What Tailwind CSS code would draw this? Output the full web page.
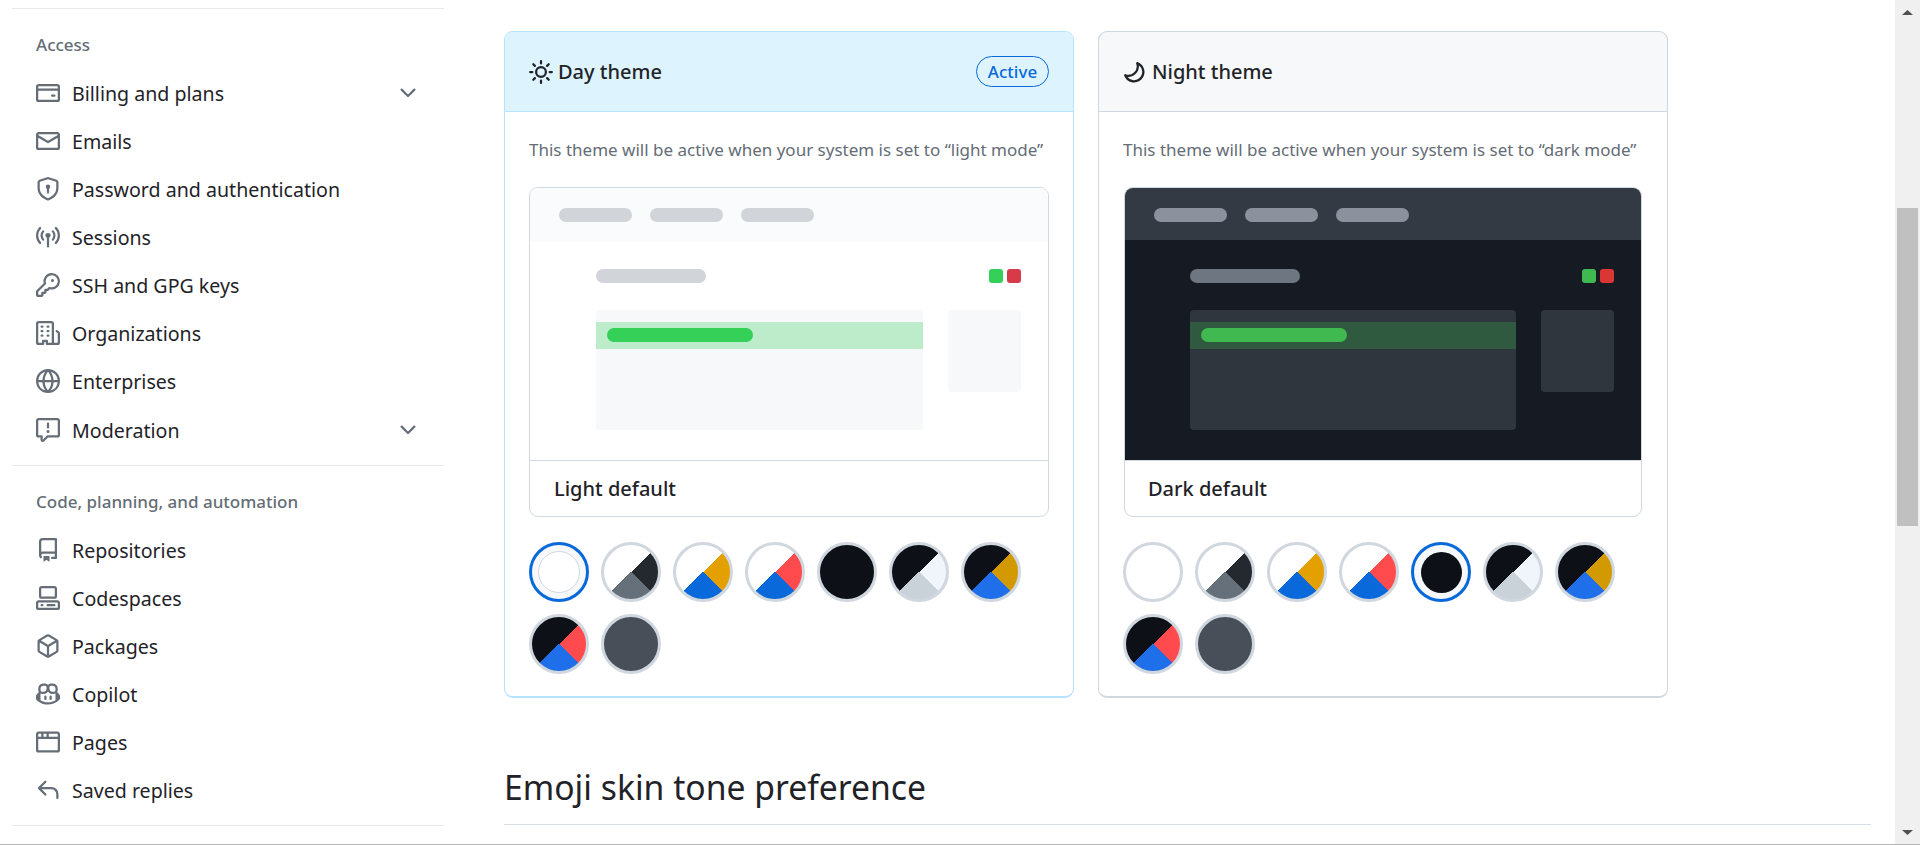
<!DOCTYPE html>
<html lang="en">
<head>
    <meta charset="utf-8">
    <title>Appearance</title>
    <script src="https://cdn.jsdelivr.net/npm/@tailwindcss/browser@4"></script>
</head>
<body class="bg-white">
<div class="h-[845px] w-[1920px] overflow-hidden flex flex-col font-['Noto_Sans',sans-serif] text-[#1f2328]">
    <div class="flex flex-1 min-h-0">

        <!-- Sidebar -->
        <nav class="w-[432px] ml-3 mr-[60px] pt-2 shrink-0 text-[19.6px]">
            <div class="border-t border-[#e5e9ed]"></div>
            <div class="h-[60px] pt-3 pl-6 flex items-center text-[17px] font-medium text-[#656d76]">Access</div>

            <div class="h-12 pl-6 pr-6 flex items-center">
                <svg class="w-6 h-6 fill-[#656d76] shrink-0" viewBox="0 0 16 16"><path d="M10.75 9a.75.75 0 0 0 0 1.5h1.5a.75.75 0 0 0 0-1.5h-1.5Z"/><path d="M0 3.75C0 2.784.784 2 1.75 2h12.5c.966 0 1.75.784 1.75 1.75v8.5A1.75 1.75 0 0 1 14.25 14H1.75A1.75 1.75 0 0 1 0 12.25ZM14.5 6.5h-13v5.75c0 .138.112.25.25.25h12.5a.25.25 0 0 0 .25-.25Zm0-2.75a.25.25 0 0 0-.25-.25H1.75a.25.25 0 0 0-.25.25V5h13Z"/></svg>
                <span class="ml-3 pt-px">Billing and plans</span>
                <svg class="w-6 h-6 fill-[#656d76] ml-auto" viewBox="0 0 16 16"><path d="M12.78 5.22a.749.749 0 0 1 0 1.06l-4.25 4.25a.749.749 0 0 1-1.06 0L3.22 6.28a.749.749 0 1 1 1.06-1.06L8 8.939l3.72-3.719a.749.749 0 0 1 1.06 0Z"/></svg>
            </div>
            <div class="h-12 pl-6 flex items-center">
                <svg class="w-6 h-6 fill-[#656d76] shrink-0" viewBox="0 0 16 16"><path d="M1.75 2h12.5c.966 0 1.75.784 1.75 1.75v8.5A1.75 1.75 0 0 1 14.25 14H1.75A1.75 1.75 0 0 1 0 12.25v-8.5C0 2.784.784 2 1.75 2ZM1.5 12.251c0 .138.112.25.25.25h12.5a.25.25 0 0 0 .25-.25V5.809L8.38 9.397a.75.75 0 0 1-.76 0L1.5 5.809v6.442Zm13-8.181v-.32a.25.25 0 0 0-.25-.25H1.75a.25.25 0 0 0-.25.25v.32L8 7.88Z"/></svg>
                <span class="ml-3 pt-px">Emails</span>
            </div>
            <div class="h-12 pl-6 flex items-center">
                <svg class="w-6 h-6 fill-[#656d76] shrink-0" viewBox="0 0 16 16"><path d="m8.533.133 5.25 1.68A1.75 1.75 0 0 1 15 3.48V7c0 1.566-.32 3.182-1.303 4.682-.983 1.498-2.585 2.813-5.032 3.855a1.697 1.697 0 0 1-1.33 0c-2.447-1.042-4.049-2.357-5.032-3.855C1.32 10.182 1 8.566 1 7V3.48a1.75 1.75 0 0 1 1.217-1.667l5.25-1.68a1.748 1.748 0 0 1 1.066 0Zm-.61 1.429.001.001-5.25 1.68a.251.251 0 0 0-.174.237V7c0 1.36.275 2.666 1.057 3.859.784 1.194 2.121 2.342 4.366 3.298a.196.196 0 0 0 .154 0c2.245-.957 3.582-2.103 4.366-3.297C13.225 9.666 13.5 8.358 13.5 7V3.48a.25.25 0 0 0-.174-.238l-5.25-1.68a.25.25 0 0 0-.153 0ZM9.5 6.5c0 .536-.286 1.032-.75 1.3v2.45a.75.75 0 0 1-1.5 0V7.8A1.5 1.5 0 1 1 9.5 6.5Z"/></svg>
                <span class="ml-3 pt-px">Password and authentication</span>
            </div>
            <div class="h-12 pl-6 flex items-center">
                <svg class="w-6 h-6 fill-[#656d76] shrink-0" viewBox="0 0 16 16"><path d="M8.75 8.582v5.668a.75.75 0 0 1-1.5 0V8.582a1.75 1.75 0 1 1 1.5 0Zm3.983-7.125a.75.75 0 0 1 1.06.026A7.976 7.976 0 0 1 16 7c0 2.139-.84 4.083-2.207 5.517a.75.75 0 1 1-1.086-1.034A6.474 6.474 0 0 0 14.5 7a6.474 6.474 0 0 0-1.793-4.483.75.75 0 0 1 .026-1.06Zm-9.466 0c.3.286.312.76.026 1.06A6.474 6.474 0 0 0 1.5 7a6.47 6.47 0 0 0 1.793 4.483.75.75 0 0 1-1.086 1.034A7.973 7.973 0 0 1 0 7c0-2.139.84-4.083 2.207-5.517a.75.75 0 0 1 1.06-.026Zm8.556 2.321A4.988 4.988 0 0 1 13 7a4.988 4.988 0 0 1-1.177 3.222.75.75 0 1 1-1.146-.967A3.487 3.487 0 0 0 11.5 7c0-.86-.309-1.645-.823-2.255a.75.75 0 0 1 1.146-.967Zm-6.492.958A3.48 3.48 0 0 0 4.5 7a3.48 3.48 0 0 0 .823 2.255.75.75 0 0 1-1.146.967A4.981 4.981 0 0 1 3 7a4.982 4.982 0 0 1 1.188-3.236.75.75 0 1 1 1.143.972Z"/></svg>
                <span class="ml-3 pt-px">Sessions</span>
            </div>
            <div class="h-12 pl-6 flex items-center">
                <svg class="w-6 h-6 fill-[#656d76] shrink-0" viewBox="0 0 16 16"><path d="M10.5 0a5.499 5.499 0 1 1-1.288 10.848l-.932.932a.749.749 0 0 1-.53.22H7v.75a.749.749 0 0 1-.22.53l-.5.5a.749.749 0 0 1-.53.22H5v.75a.749.749 0 0 1-.22.53l-.5.5a.749.749 0 0 1-.53.22h-2A1.75 1.75 0 0 1 0 14.25v-2c0-.199.079-.389.22-.53l4.932-4.932A5.5 5.5 0 0 1 10.5 0Zm-4 5.5c-.001.431.069.86.205 1.269a.75.75 0 0 1-.181.768L1.5 12.56v1.69c0 .138.112.25.25.25h1.69l.06-.06v-1.19a.75.75 0 0 1 .75-.75h1.19l.06-.06v-1.19a.75.75 0 0 1 .75-.75h1.19l1.023-1.025a.75.75 0 0 1 .768-.18A4 4 0 1 0 6.5 5.5ZM11 6a1 1 0 1 1 0-2 1 1 0 0 1 0 2Z"/></svg>
                <span class="ml-3 pt-px">SSH and GPG keys</span>
            </div>
            <div class="h-12 pl-6 flex items-center">
                <svg class="w-6 h-6 fill-[#656d76] shrink-0" viewBox="0 0 16 16"><path d="M1.75 16A1.75 1.75 0 0 1 0 14.25V1.75C0 .784.784 0 1.75 0h8.5C11.216 0 12 .784 12 1.75v12.5c0 .085-.006.168-.018.25h2.268a.25.25 0 0 0 .25-.25V8.285a.25.25 0 0 0-.111-.208l-1.055-.703a.749.749 0 1 1 .832-1.248l1.055.703c.487.325.779.871.779 1.456v5.965A1.75 1.75 0 0 1 14.25 16h-3.5a.766.766 0 0 1-.197-.026c-.099.017-.2.026-.303.026h-3a.75.75 0 0 1-.75-.75V14h-1v1.25a.75.75 0 0 1-.75.75Zm-.25-1.75c0 .138.112.25.25.25H4v-1.25a.75.75 0 0 1 .75-.75h2.5a.75.75 0 0 1 .75.75v1.25h2.25a.25.25 0 0 0 .25-.25V1.75a.25.25 0 0 0-.25-.25h-8.5a.25.25 0 0 0-.25.25ZM3.75 6h.5a.75.75 0 0 1 0 1.5h-.5a.75.75 0 0 1 0-1.5ZM3 3.75A.75.75 0 0 1 3.75 3h.5a.75.75 0 0 1 0 1.5h-.5A.75.75 0 0 1 3 3.75Zm4 3A.75.75 0 0 1 7.75 6h.5a.75.75 0 0 1 0 1.5h-.5A.75.75 0 0 1 7 6.75ZM7.75 3h.5a.75.75 0 0 1 0 1.5h-.5a.75.75 0 0 1 0-1.5ZM3 9.75A.75.75 0 0 1 3.75 9h.5a.75.75 0 0 1 0 1.5h-.5A.75.75 0 0 1 3 9.75ZM7.75 9h.5a.75.75 0 0 1 0 1.5h-.5a.75.75 0 0 1 0-1.5Z"/></svg>
                <span class="ml-3 pt-px">Organizations</span>
            </div>
            <div class="h-12 pl-6 flex items-center">
                <svg class="w-6 h-6 fill-[#656d76] shrink-0" viewBox="0 0 16 16"><path d="M8 0a8 8 0 1 1 0 16A8 8 0 0 1 8 0ZM5.78 8.75a9.64 9.64 0 0 0 1.363 4.177c.255.426.542.832.857 1.215.245-.296.551-.705.857-1.215A9.64 9.64 0 0 0 10.22 8.75Zm4.44-1.5a9.64 9.64 0 0 0-1.363-4.177c-.307-.51-.612-.919-.857-1.215a9.927 9.927 0 0 0-.857 1.215A9.64 9.64 0 0 0 5.78 7.25Zm-5.944 1.5H1.543a6.507 6.507 0 0 0 4.666 5.5c-.123-.181-.24-.365-.352-.552-.715-1.192-1.437-2.874-1.581-4.948Zm-2.733-1.5h2.733c.144-2.074.866-3.756 1.58-4.948.12-.197.237-.381.353-.552a6.507 6.507 0 0 0-4.666 5.5Zm10.181 1.5c-.144 2.074-.866 3.756-1.58 4.948-.12.197-.237.381-.353.552a6.507 6.507 0 0 0 4.666-5.5Zm2.733-1.5a6.507 6.507 0 0 0-4.666-5.5c.123.181.24.365.353.552.714 1.192 1.436 2.874 1.58 4.948Z"/></svg>
                <span class="ml-3 pt-px">Enterprises</span>
            </div>
            <div class="h-12 mt-px pl-6 pr-6 flex items-center">
                <svg class="w-6 h-6 fill-[#656d76] shrink-0" viewBox="0 0 16 16"><path d="M0 1.75C0 .784.784 0 1.75 0h12.5C15.216 0 16 .784 16 1.75v9.5A1.75 1.75 0 0 1 14.25 13H8.06l-2.573 2.573A1.458 1.458 0 0 1 3 14.543V13H1.75A1.75 1.75 0 0 1 0 11.25Zm1.75-.25a.25.25 0 0 0-.25.25v9.5c0 .138.112.25.25.25h2a.75.75 0 0 1 .75.75v2.19l2.72-2.72a.749.749 0 0 1 .53-.22h6.5a.25.25 0 0 0 .25-.25v-9.5a.25.25 0 0 0-.25-.25Zm7 2.25v2.5a.75.75 0 0 1-1.5 0v-2.5a.75.75 0 0 1 1.5 0ZM9 9a1 1 0 1 1-2 0 1 1 0 0 1 2 0Z"/></svg>
                <span class="ml-3 pt-px">Moderation</span>
                <svg class="w-6 h-6 fill-[#656d76] ml-auto" viewBox="0 0 16 16"><path d="M12.78 5.22a.749.749 0 0 1 0 1.06l-4.25 4.25a.749.749 0 0 1-1.06 0L3.22 6.28a.749.749 0 1 1 1.06-1.06L8 8.939l3.72-3.719a.749.749 0 0 1 1.06 0Z"/></svg>
            </div>

            <div class="mt-[11px] border-t border-[#e5e9ed]"></div>
            <div class="h-[60px] pt-3 pl-6 flex items-center text-[17px] font-medium text-[#656d76]">Code, planning, and automation</div>

            <div class="h-12 pl-6 flex items-center">
                <svg class="w-6 h-6 fill-[#656d76] shrink-0" viewBox="0 0 16 16"><path d="M2 2.5A2.5 2.5 0 0 1 4.5 0h8.75a.75.75 0 0 1 .75.75v12.5a.75.75 0 0 1-.75.75h-2.5a.75.75 0 0 1 0-1.5h1.75v-2h-8a1 1 0 0 0-.714 1.7.75.75 0 1 1-1.072 1.05A2.495 2.495 0 0 1 2 11.5Zm10.5-1h-8a1 1 0 0 0-1 1v6.708A2.486 2.486 0 0 1 4.5 9h8ZM5 12.25a.25.25 0 0 1 .25-.25h3.5a.25.25 0 0 1 .25.25v3.25a.25.25 0 0 1-.4.2l-1.45-1.087a.249.249 0 0 0-.3 0L5.4 15.7a.25.25 0 0 1-.4-.2Z"/></svg>
                <span class="ml-3 pt-px">Repositories</span>
            </div>
            <div class="h-12 pl-6 flex items-center">
                <svg class="w-6 h-6 fill-[#656d76] shrink-0" viewBox="0 0 16 16"><path d="M0 11.25c0-.966.784-1.75 1.75-1.75h12.5c.966 0 1.75.784 1.75 1.75v3A1.75 1.75 0 0 1 14.25 16H1.75A1.75 1.75 0 0 1 0 14.25Zm2-9.5C2 .784 2.784 0 3.75 0h8.5C13.216 0 14 .784 14 1.75v5a1.75 1.75 0 0 1-1.75 1.75h-8.5A1.75 1.75 0 0 1 2 6.75Zm1.75-.25a.25.25 0 0 0-.25.25v5c0 .138.112.25.25.25h8.5a.25.25 0 0 0 .25-.25v-5a.25.25 0 0 0-.25-.25Zm-2 9.5a.25.25 0 0 0-.25.25v3c0 .138.112.25.25.25h12.5a.25.25 0 0 0 .25-.25v-3a.25.25 0 0 0-.25-.25Z"/><path d="M7 12.75a.75.75 0 0 1 .75-.75h4.5a.75.75 0 0 1 0 1.5h-4.5a.75.75 0 0 1-.75-.75Zm-4 0a.75.75 0 0 1 .75-.75h.5a.75.75 0 0 1 0 1.5h-.5a.75.75 0 0 1-.75-.75Z"/></svg>
                <span class="ml-3 pt-px">Codespaces</span>
            </div>
            <div class="h-12 pl-6 flex items-center">
                <svg class="w-6 h-6 fill-[#656d76] shrink-0" viewBox="0 0 16 16"><path d="m8.878.392 5.25 3.045c.54.314.872.89.872 1.514v6.098a1.75 1.75 0 0 1-.872 1.514l-5.25 3.045a1.75 1.75 0 0 1-1.756 0l-5.25-3.045A1.75 1.75 0 0 1 1 11.049V4.951c0-.624.332-1.201.872-1.514L7.122.392a1.75 1.75 0 0 1 1.756 0ZM7.875 1.69l-4.63 2.685L8 7.133l4.755-2.758-4.63-2.685a.248.248 0 0 0-.25 0ZM2.5 5.677v5.372c0 .09.047.171.125.216l4.625 2.683V8.432Zm6.25 8.271 4.625-2.683a.25.25 0 0 0 .125-.216V5.677L8.75 8.432Z"/></svg>
                <span class="ml-3 pt-px">Packages</span>
            </div>
            <div class="h-12 pl-6 flex items-center">
                <svg class="w-6 h-6 fill-[#656d76] shrink-0" viewBox="0 0 16 16"><path d="M7.998 15.035c-4.562 0-7.873-2.914-7.998-3.749V9.338c.085-.628.677-1.686 1.588-2.065.013-.07.024-.143.036-.218.029-.183.06-.384.126-.612-.201-.508-.254-1.084-.254-1.656 0-.87.128-1.769.693-2.484.579-.733 1.494-1.124 2.724-1.261 1.206-.134 2.262.034 2.944.765.05.053.096.108.139.165.044-.057.094-.112.143-.165.682-.731 1.738-.899 2.944-.765 1.23.137 2.145.528 2.724 1.261.566.715.693 1.614.693 2.484 0 .572-.053 1.148-.254 1.656.066.228.098.429.126.612.012.076.024.148.037.218.924.385 1.522 1.471 1.591 2.095v1.872c0 .766-3.351 3.795-8.002 3.795Zm0-1.485c2.28 0 4.584-1.11 5.002-1.433V7.862l-.023-.116c-.49.21-1.075.291-1.727.291-1.146 0-2.059-.327-2.71-.991A3.222 3.222 0 0 1 8 6.303a3.24 3.24 0 0 1-.544.743c-.65.664-1.563.991-2.71.991-.652 0-1.236-.081-1.727-.291l-.023.116v4.255c.419.323 2.722 1.433 5.002 1.433ZM6.762 2.83c-.193-.206-.637-.413-1.682-.297-1.019.113-1.479.404-1.713.7-.247.312-.369.789-.369 1.554 0 .793.129 1.171.308 1.371.162.181.519.379 1.442.379.853 0 1.339-.235 1.638-.54.315-.322.527-.827.617-1.553.117-.935-.037-1.395-.241-1.614Zm4.155-.297c-1.044-.116-1.488.091-1.681.297-.204.219-.359.679-.242 1.614.091.726.303 1.231.618 1.553.299.305.784.54 1.638.54.922 0 1.28-.198 1.442-.379.179-.2.308-.578.308-1.371 0-.765-.123-1.242-.37-1.554-.233-.296-.693-.587-1.713-.7Z"/><path d="M6.25 9.037a.75.75 0 0 1 .75.75v1.501a.75.75 0 0 1-1.5 0V9.787a.75.75 0 0 1 .75-.75Zm4.25.75v1.501a.75.75 0 0 1-1.5 0V9.787a.75.75 0 0 1 1.5 0Z"/></svg>
                <span class="ml-3 pt-px">Copilot</span>
            </div>
            <div class="h-12 pl-6 flex items-center">
                <svg class="w-6 h-6 fill-[#656d76] shrink-0" viewBox="0 0 16 16"><path d="M0 2.75C0 1.784.784 1 1.75 1h12.5c.966 0 1.75.784 1.75 1.75v10.5A1.75 1.75 0 0 1 14.25 15H1.75A1.75 1.75 0 0 1 0 13.25ZM14.5 6h-13v7.25c0 .138.112.25.25.25h12.5a.25.25 0 0 0 .25-.25Zm-6-3.5v2h6v-1.75a.25.25 0 0 0-.25-.25ZM5 2.5v2h2v-2Zm-3.25 0a.25.25 0 0 0-.25.25V4.5h2v-2Z"/></svg>
                <span class="ml-3 pt-px">Pages</span>
            </div>
            <div class="h-12 pl-6 flex items-center">
                <svg class="w-6 h-6 fill-[#656d76] shrink-0" viewBox="0 0 16 16"><path d="M6.78 1.97a.75.75 0 0 1 0 1.06L3.81 6h6.44A4.75 4.75 0 0 1 15 10.75v2.5a.75.75 0 0 1-1.5 0v-2.5a3.25 3.25 0 0 0-3.25-3.25H3.81l2.97 2.97a.749.749 0 0 1-.326 1.275.749.749 0 0 1-.734-.215L1.47 7.28a.75.75 0 0 1 0-1.06l4.25-4.25a.75.75 0 0 1 1.06 0Z"/></svg>
                <span class="ml-3 pt-px">Saved replies</span>
            </div>
            <div class="mt-[11px] border-t border-[#e5e9ed]"></div>
        </nav>

        <!-- Main column -->
        <main class="w-[1367px] shrink-0 pt-[31px]">
            <div class="flex gap-6">

                <!-- Day theme card -->
                <section class="w-[570px] h-[667px] border border-b-2 border-[#b6e3ff] rounded-[9px]">
                    <div class="h-[80px] bg-[#ddf4ff] border-b border-[#b6e3ff] rounded-t-[8px] px-6 flex items-center">
                        <svg class="w-6 h-6 fill-[#1f2328] shrink-0" viewBox="0 0 16 16"><path d="M8 12a4 4 0 1 1 0-8 4 4 0 0 1 0 8Zm0-1.5a2.5 2.5 0 1 0 0-5 2.5 2.5 0 0 0 0 5Zm5.657-8.157a.75.75 0 0 1 0 1.061l-1.061 1.06a.749.749 0 0 1-1.275-.326.749.749 0 0 1 .215-.734l1.06-1.06a.75.75 0 0 1 1.06 0Zm-9.193 9.193a.75.75 0 0 1 0 1.06l-1.06 1.061a.75.75 0 1 1-1.061-1.061l1.06-1.06a.75.75 0 0 1 1.061 0ZM8 0a.75.75 0 0 1 .75.75v1.5a.75.75 0 0 1-1.5 0V.75A.75.75 0 0 1 8 0ZM3 8a.75.75 0 0 1-.75.75H.75a.75.75 0 0 1 0-1.5h1.5A.75.75 0 0 1 3 8Zm13 0a.75.75 0 0 1-.75.75h-1.5a.75.75 0 0 1 0-1.5h1.5A.75.75 0 0 1 16 8Zm-8 5a.75.75 0 0 1 .75.75v1.5a.75.75 0 0 1-1.5 0v-1.5A.75.75 0 0 1 8 13Zm3.536-1.464a.75.75 0 0 1 1.06 0l1.061 1.06a.75.75 0 0 1-1.061 1.061l-1.06-1.06a.75.75 0 0 1 0-1.061ZM2.343 2.343a.75.75 0 0 1 1.061 0l1.06 1.061a.751.751 0 0 1-.018 1.042.751.751 0 0 1-1.042.018l-1.06-1.06a.75.75 0 0 1 0-1.06Z"/></svg>
                        <h3 class="ml-[5px] pt-px text-[20px] font-medium">Day theme</h3>
                        <span class="ml-auto w-[73px] h-[31px] rounded-full border-[1.5px] border-[#0969da] text-[#0969da] text-[17px] font-medium flex items-center justify-center">Active</span>
                    </div>
                    <div class="px-6 pt-[25px]">
                        <p class="h-[26px] leading-[26px] text-[17px] text-[#656d76] whitespace-nowrap mb-6">This theme will be active when your system is set to “light mode”</p>

                        <div class="border border-[#d0d7de] rounded-[9px] overflow-hidden">
                            <div class="h-[54px] bg-[#fafbfc] pt-5 pl-[29px] flex items-start gap-[18px]">
                                <span class="w-[73px] h-[14px] rounded-full bg-[#d1d5da]"></span>
                                <span class="w-[73px] h-[14px] rounded-full bg-[#d1d5da]"></span>
                                <span class="w-[73px] h-[14px] rounded-full bg-[#d1d5da]"></span>
                            </div>
                            <div class="h-[218px] bg-white pt-[27px] pl-[66px] pr-[27px]">
                                <div class="h-[14px] flex justify-between">
                                    <span class="w-[110px] h-[14px] rounded-full bg-[#d1d5da]"></span>
                                    <div class="flex gap-1">
                                        <span class="w-[14px] h-[14px] rounded-[3px] bg-[#34d058]"></span>
                                        <span class="w-[14px] h-[14px] rounded-[3px] bg-[#d73a49]"></span>
                                    </div>
                                </div>
                                <div class="mt-[27px] flex gap-[25px] items-start">
                                    <div class="flex-1 h-[120px] rounded-[4px] bg-[#f6f8fa] pt-3 overflow-hidden">
                                        <div class="h-[27px] bg-[#bcecc9] pt-[6px] pl-[11px]">
                                            <div class="w-[146px] h-[14px] rounded-full bg-[#34d058]"></div>
                                        </div>
                                    </div>
                                    <div class="w-[73px] h-[82px] rounded-[4px] bg-[#f6f8fa]"></div>
                                </div>
                            </div>
                            <div class="h-[56px] border-t border-[#d0d7de] pl-6 pt-px flex items-center text-[20px] font-medium">Light default</div>
                        </div>

                        <div class="mt-[25px] flex flex-wrap gap-3">
                            <div class="w-[60px] h-[60px] rounded-full border-[3px] border-[#0969da] bg-[#f6f8fa] flex items-center justify-center"><div class="w-[42px] h-[42px] rounded-full bg-white border border-[#d0d7de]"></div></div>
                            <div class="w-[60px] h-[60px] rounded-full border-[3px] border-[#d0d7de] bg-[conic-gradient(#ffffff_0_45deg,#24292f_45deg_135deg,#66707b_135deg_225deg,#ffffff_225deg)]"></div>
                            <div class="w-[60px] h-[60px] rounded-full border-[3px] border-[#d0d7de] bg-[conic-gradient(#ffffff_0_45deg,#e3a000_45deg_135deg,#0969da_135deg_225deg,#ffffff_225deg)]"></div>
                            <div class="w-[60px] h-[60px] rounded-full border-[3px] border-[#d0d7de] bg-[conic-gradient(#ffffff_0_45deg,#ff4b4d_45deg_135deg,#0969da_135deg_225deg,#ffffff_225deg)]"></div>
                            <div class="w-[60px] h-[60px] rounded-full border-[3px] border-[#d0d7de] bg-[#0d1117]"></div>
                            <div class="w-[60px] h-[60px] rounded-full border-[3px] border-[#d0d7de] bg-[conic-gradient(#0d1117_0_45deg,#f0f5fc_45deg_135deg,#c9d1d9_135deg_225deg,#0d1117_225deg)]"></div>
                            <div class="w-[60px] h-[60px] rounded-full border-[3px] border-[#d0d7de] bg-[conic-gradient(#0d1117_0_45deg,#d29900_45deg_135deg,#1f6feb_135deg_225deg,#0d1117_225deg)]"></div>
                            <div class="w-[60px] h-[60px] rounded-full border-[3px] border-[#d0d7de] bg-[conic-gradient(#0d1117_0_45deg,#ff4b4d_45deg_135deg,#1f6feb_135deg_225deg,#0d1117_225deg)]"></div>
                            <div class="w-[60px] h-[60px] rounded-full border-[3px] border-[#d0d7de] bg-[#484f58]"></div>
                        </div>
                    </div>
                </section>

                <!-- Night theme card -->
                <section class="w-[570px] h-[667px] border border-b-2 border-[#d0d7de] rounded-[9px]">
                    <div class="h-[80px] -mx-px bg-[#f6f8fa] border-x border-b border-[#d0d7de] rounded-t-[9px] pl-[23px] flex items-center">
                        <svg class="w-6 h-6 fill-[#1f2328] shrink-0" viewBox="0 0 16 16"><path d="M9.598 1.591a.749.749 0 0 1 .785-.175 7.001 7.001 0 1 1-8.967 8.967.75.75 0 0 1 .961-.96 5.5 5.5 0 0 0 7.046-7.046.75.75 0 0 1 .175-.786Zm1.616 1.945a7 7 0 0 1-7.678 7.678 5.499 5.499 0 1 0 7.678-7.678Z"/></svg>
                        <h3 class="ml-[6px] pt-px text-[20px] font-medium">Night theme</h3>
                    </div>
                    <div class="px-[25px] pt-[25px]">
                        <p class="-ml-px h-[26px] leading-[26px] text-[17px] text-[#656d76] whitespace-nowrap mb-6">This theme will be active when your system is set to “dark mode”</p>

                        <div class="border border-[#d0d7de] rounded-[9px] overflow-hidden">
                            <div class="h-[52px] bg-[#343a43] pt-5 pl-[29px] flex items-start gap-[18px]">
                                <span class="w-[73px] h-[14px] rounded-full bg-[#8b929d]"></span>
                                <span class="w-[73px] h-[14px] rounded-full bg-[#8b929d]"></span>
                                <span class="w-[73px] h-[14px] rounded-full bg-[#8b929d]"></span>
                            </div>
                            <div class="h-[220px] bg-[#161a22] pt-[29px] pl-[65px] pr-[27px]">
                                <div class="h-[14px] flex justify-between">
                                    <span class="w-[110px] h-[14px] rounded-full bg-[#6e7681]"></span>
                                    <div class="flex gap-1">
                                        <span class="w-[14px] h-[14px] rounded-[3px] bg-[#3fb950]"></span>
                                        <span class="w-[14px] h-[14px] rounded-[3px] bg-[#da3633]"></span>
                                    </div>
                                </div>
                                <div class="mt-[27px] flex gap-[25px] items-start">
                                    <div class="flex-1 h-[120px] rounded-[4px] bg-[#30363d] pt-3 overflow-hidden">
                                        <div class="h-[27px] bg-[#2f5a40] pt-[6px] pl-[11px]">
                                            <div class="w-[146px] h-[14px] rounded-full bg-[#3fb950]"></div>
                                        </div>
                                    </div>
                                    <div class="w-[73px] h-[82px] rounded-[4px] bg-[#30363d]"></div>
                                </div>
                            </div>
                            <div class="h-[56px] border-t border-[#d0d7de] pl-[23px] pt-px flex items-center text-[20px] font-medium">Dark default</div>
                        </div>

                        <div class="mt-[25px] -ml-px flex flex-wrap gap-3">
                            <div class="w-[60px] h-[60px] rounded-full border-[3px] border-[#d0d7de] bg-white"></div>
                            <div class="w-[60px] h-[60px] rounded-full border-[3px] border-[#d0d7de] bg-[conic-gradient(#ffffff_0_45deg,#24292f_45deg_135deg,#66707b_135deg_225deg,#ffffff_225deg)]"></div>
                            <div class="w-[60px] h-[60px] rounded-full border-[3px] border-[#d0d7de] bg-[conic-gradient(#ffffff_0_45deg,#e3a000_45deg_135deg,#0969da_135deg_225deg,#ffffff_225deg)]"></div>
                            <div class="w-[60px] h-[60px] rounded-full border-[3px] border-[#d0d7de] bg-[conic-gradient(#ffffff_0_45deg,#ff4b4d_45deg_135deg,#0969da_135deg_225deg,#ffffff_225deg)]"></div>
                            <div class="w-[60px] h-[60px] rounded-full border-[3px] border-[#0969da] bg-[#f6f8fa] flex items-center justify-center"><div class="w-[41px] h-[41px] rounded-full bg-[#0d1117]"></div></div>
                            <div class="w-[60px] h-[60px] rounded-full border-[3px] border-[#d0d7de] bg-[conic-gradient(#0d1117_0_45deg,#f0f5fc_45deg_135deg,#c9d1d9_135deg_225deg,#0d1117_225deg)]"></div>
                            <div class="w-[60px] h-[60px] rounded-full border-[3px] border-[#d0d7de] bg-[conic-gradient(#0d1117_0_45deg,#d29900_45deg_135deg,#1f6feb_135deg_225deg,#0d1117_225deg)]"></div>
                            <div class="w-[60px] h-[60px] rounded-full border-[3px] border-[#d0d7de] bg-[conic-gradient(#0d1117_0_45deg,#ff4b4d_45deg_135deg,#1f6feb_135deg_225deg,#0d1117_225deg)]"></div>
                            <div class="w-[60px] h-[60px] rounded-full border-[3px] border-[#d0d7de] bg-[#484f58]"></div>
                        </div>
                    </div>
                </section>
            </div>

            <h2 class="mt-[66px] h-[61px] pb-[14px] leading-[46px] text-[33.7px] border-b border-[#d8dee4]">Emoji skin tone preference</h2>
        </main>

        <!-- Scrollbar -->
        <div class="ml-auto w-[25px] bg-[#f0f0f0] flex flex-col items-center shrink-0">
            <svg class="mt-[10px] w-[11px] h-[5px] fill-[#505050]" viewBox="0 0 11 5"><path d="M5.5 0 11 5H0Z"/></svg>
            <div class="mt-[193px] w-[21px] h-[318px] bg-[#c0c0c0]"></div>
            <svg class="mt-auto mb-[9px] w-[11px] h-[5px] fill-[#505050]" viewBox="0 0 11 5"><path d="M0 0H11L5.5 5Z"/></svg>
        </div>
    </div>
    <div class="h-px bg-[#b5b5b5]"></div>
</div>
</body>
</html>
